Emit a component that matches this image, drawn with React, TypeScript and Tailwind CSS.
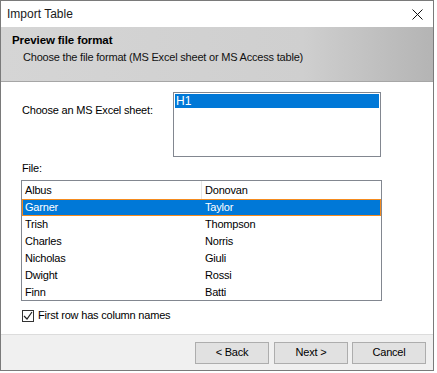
import { useState } from "react";

const rows = [
  ["Garner", "Taylor"],
  ["Trish", "Thompson"],
  ["Charles", "Norris"],
  ["Nicholas", "Giuli"],
  ["Dwight", "Rossi"],
  ["Finn", "Batti"],
];

export default function App() {
  const [checked, setChecked] = useState(true);
  const [sel, setSel] = useState(0);

  return (
    <div className="w-[437px] h-[373px] bg-white font-['Liberation_Sans',Arial,sans-serif] text-[11px] tracking-[-0.2px] text-black">
      <div className="w-[434px] h-[371px] border border-[#7a7a7a] flex flex-col">
        {/* title bar */}
        <div className="h-[26px] flex items-center justify-between pl-[6px] pr-[10px] text-[12px] tracking-normal">
          <span className="text-[#1a1a1a]">Import Table</span>
          <svg width="11" height="11" viewBox="0 0 11 11" className="mt-[1px]">
            <path d="M0.5 0.5 L10.5 10.5 M10.5 0.5 L0.5 10.5" stroke="#111" strokeWidth="1" fill="none" />
          </svg>
        </div>

        {/* header */}
        <div className="h-[55px] bg-gradient-to-r from-[#d5d5d5] via-[#cfcfcf] via-70% to-[#b4b4b4] border-b border-[#a6a6a6] pl-[11px] pt-[6px]">
          <div className="font-bold leading-[15px] text-[11.5px] tracking-[-0.1px]">Preview file format</div>
          <div className="pl-[11px] mt-[2px] leading-[15px] text-[#111]">
            Choose the file format (MS Excel sheet or MS Access table)
          </div>
        </div>

        {/* body */}
        <div className="flex-1 flex flex-col pl-[20px] pr-[52px] pt-[10px]">
          <div className="flex">
            <div className="w-[152px] pt-[10px] pl-[1px]">Choose an MS Excel sheet:</div>
            <div className="w-[208px] h-[65px] border border-[#828790] p-px">
              <div className="h-[14px] bg-[#0078d7] text-white pl-[1px] leading-[14px] text-[12px] tracking-normal">H1</div>
            </div>
          </div>
          <div className="mt-[4px] pl-[1px] leading-[14px]">File:</div>
          <div className="mt-[5px] w-[361px] h-[121px] border border-[#828790] overflow-hidden">
            <div className="flex h-[18px] items-center">
              <div className="w-[180px] pl-[3px] border-r border-[#e5e5e5] h-full leading-[18px]">Albus</div>
              <div className="pl-[3px] leading-[18px]">Donovan</div>
            </div>
            {rows.map(([a, b], i) => (
              <div
                key={a}
                onClick={() => setSel(i)}
                className={`flex h-[17px] items-center ${
                  sel === i ? "bg-[#0078d7] text-white border border-[#f48b1f]" : "border border-transparent"
                }`}
              >
                <div className="w-[179px] pl-[2px] leading-[15px]">{a}</div>
                <div className="pl-[3px] leading-[15px]">{b}</div>
              </div>
            ))}
          </div>
          <label className="flex items-center h-[13px] mt-[8px] pl-[1px] gap-[4px]">
            <span
              onClick={() => setChecked(!checked)}
              className="w-[12px] h-[12px] border border-[#333] bg-white flex items-center justify-center"
            >
              {checked && (
                <svg width="10" height="10" viewBox="0 0 10 10">
                  <path d="M1 5 L4 8 L9 1" stroke="#222" strokeWidth="1.2" fill="none" />
                </svg>
              )}
            </span>
            <span>First row has column names</span>
          </label>
        </div>

        {/* footer */}
        <div className="h-[36px] bg-[#f0f0f0] border-t border-[#dcdcdc] flex items-center justify-end gap-[5px] pr-[7px]">
          <button className="w-[74px] h-[22px] bg-[#e1e1e1] border border-[#adadad]">&lt; Back</button>
          <button className="w-[74px] h-[22px] bg-[#e1e1e1] border border-[#adadad]">Next &gt;</button>
          <button className="w-[74px] h-[22px] bg-[#e1e1e1] border border-[#adadad] ml-[-1px]">Cancel</button>
        </div>
      </div>
    </div>
  );
}
